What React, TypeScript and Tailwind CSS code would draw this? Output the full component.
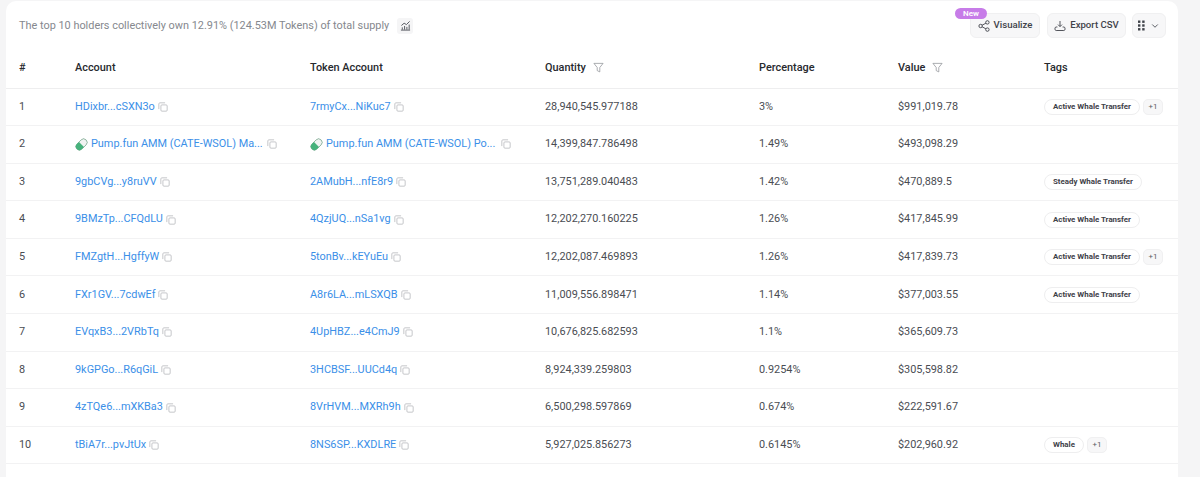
import React from "react";
import { ChevronDown } from "lucide-react";

interface Holder {
  rank: number;
  account: string;
  tokenAccount: string;
  quantity: string;
  percentage: string;
  value: string;
  tag?: string;
  more?: boolean;
  pill?: boolean;
}

const holders: Holder[] = [
  { rank: 1, account: "HDixbr...cSXN3o", tokenAccount: "7rmyCx...NiKuc7", quantity: "28,940,545.977188", percentage: "3%", value: "$991,019.78", tag: "Active Whale Transfer", more: true },
  { rank: 2, account: "Pump.fun AMM (CATE-WSOL) Ma...", tokenAccount: "Pump.fun AMM (CATE-WSOL) Po...", quantity: "14,399,847.786498", percentage: "1.49%", value: "$493,098.29", pill: true },
  { rank: 3, account: "9gbCVg...y8ruVV", tokenAccount: "2AMubH...nfE8r9", quantity: "13,751,289.040483", percentage: "1.42%", value: "$470,889.5", tag: "Steady Whale Transfer" },
  { rank: 4, account: "9BMzTp...CFQdLU", tokenAccount: "4QzjUQ...nSa1vg", quantity: "12,202,270.160225", percentage: "1.26%", value: "$417,845.99", tag: "Active Whale Transfer" },
  { rank: 5, account: "FMZgtH...HgffyW", tokenAccount: "5tonBv...kEYuEu", quantity: "12,202,087.469893", percentage: "1.26%", value: "$417,839.73", tag: "Active Whale Transfer", more: true },
  { rank: 6, account: "FXr1GV...7cdwEf", tokenAccount: "A8r6LA...mLSXQB", quantity: "11,009,556.898471", percentage: "1.14%", value: "$377,003.55", tag: "Active Whale Transfer" },
  { rank: 7, account: "EVqxB3...2VRbTq", tokenAccount: "4UpHBZ...e4CmJ9", quantity: "10,676,825.682593", percentage: "1.1%", value: "$365,609.73" },
  { rank: 8, account: "9kGPGo...R6qGiL", tokenAccount: "3HCBSF...UUCd4q", quantity: "8,924,339.259803", percentage: "0.9254%", value: "$305,598.82" },
  { rank: 9, account: "4zTQe6...mXKBa3", tokenAccount: "8VrHVM...MXRh9h", quantity: "6,500,298.597869", percentage: "0.674%", value: "$222,591.67" },
  { rank: 10, account: "tBiA7r...pvJtUx", tokenAccount: "8NS6SP...KXDLRE", quantity: "5,927,025.856273", percentage: "0.6145%", value: "$202,960.92", tag: "Whale", more: true },
];

const CopyIcon = () => (
  <svg viewBox="0 0 12 12" fill="none" stroke="#b9bbbf" strokeWidth="1" className="ml-[3px] inline-block h-[10px] w-[10px] shrink-0">
    <rect x="3.5" y="3.5" width="7.5" height="7.5" rx="1.2" />
    <path d="M8.5 1H2.2C1.5 1 1 1.5 1 2.2V8.5" />
  </svg>
);

const FilterIcon = () => (
  <svg viewBox="0 0 12 12" fill="none" stroke="#8d9096" strokeWidth="0.8" className="ml-[7px] inline-block h-[11px] w-[11px]">
    <path d="M1 1.5h10L7.4 6v4.8L4.6 9.4V6z" strokeLinejoin="round" />
  </svg>
);

const PillIcon = () => (
  <svg viewBox="0 0 14 14" className="mr-[3px] inline-block h-[13px] w-[13px] shrink-0">
    <g transform="rotate(-45 7 7)">
      <rect x="0" y="3.2" width="14" height="7.6" rx="3.8" fill="#f1f3f2" stroke="#4b8a68" strokeWidth="0.6" />
      <path d="M3.8 3.2H7v7.6H3.800a3.800 3.800 0 0 1 0-7.600z" fill="#47b27c" />
    </g>
  </svg>
);

const ChartIcon = () => (
  <svg viewBox="0 0 12 12" fill="none" stroke="#4b4f56" strokeWidth="1" className="h-[11px] w-[11px]">
    <path d="M1 11h10M2.5 10.5V8M5 10.500V6.500M7.500 10.500V7.500M10 10.500V5" />
    <path d="M1.500 6L4.500 3.500 7 5 10.500 1.500" />
  </svg>
);

const ShareIcon = () => (
  <svg viewBox="0 0 12 12" fill="none" stroke="#3f4249" strokeWidth="0.9" className="h-[12px] w-[12px]">
    <circle cx="2.600" cy="6" r="1.700" />
    <circle cx="9.400" cy="2.400" r="1.700" />
    <circle cx="9.400" cy="9.600" r="1.700" />
    <path d="M4.100 5.200l3.800-2M4.100 6.800l3.800 2" />
  </svg>
);

const ExportIcon = () => (
  <svg viewBox="0 0 12 12" fill="none" stroke="#3f4249" strokeWidth="0.9" className="h-[12px] w-[12px]">
    <path d="M6 1v5.400M4 4.600l2 2 2-2" />
    <path d="M3.400 7H2.200C1.500 7 1 7.500 1 8.200v1.100c0 .7.5 1.200 1.200 1.200h7.600c.7 0 1.200-.5 1.200-1.200V8.200C11 7.500 10.500 7 9.800 7H8.600" />
  </svg>
);

const DotsIcon = () => (
  <svg viewBox="0 0 7 11" fill="#3f4249" className="h-[11px] w-[7px]">
    <rect x="0" y="0.5" width="2.4" height="2.4" />
    <rect x="4.2" y="0.5" width="2.4" height="2.4" />
    <rect x="0" y="4.300" width="2.4" height="2.4" />
    <rect x="4.2" y="4.300" width="2.4" height="2.4" />
    <rect x="0" y="8.100" width="2.4" height="2.4" />
    <rect x="4.2" y="8.100" width="2.4" height="2.4" />
  </svg>
);

export default function App() {
  return (
    <div className="h-[477px] w-[1200px] overflow-hidden bg-[#f5f5f6] pl-[6px] pr-[22px] pt-px font-['Roboto',sans-serif]">
      <div className="h-[490px] rounded-tl-[10px] rounded-tr-[10px] bg-white">
        {/* Top bar */}
        <div className="flex h-[47px] items-start justify-between pl-[13px] pr-[12px] pt-[12px]">
          <div className="flex items-center text-[10.900px] leading-[25px] text-[#85888e]">
            The top 10 holders collectively own 12.91% (124.53M Tokens) of total supply
            <span className="ml-[8px] flex h-[16px] w-[16px] items-center justify-center rounded-[3px] bg-[#f5f5f6]">
              <ChartIcon />
            </span>
          </div>
          <div className="flex items-center gap-[6px]">
            <div className="relative mr-px">
              <span className="absolute -left-[15px] -top-[5px] rounded-full bg-[#c77ce8] px-[8px] text-[8px] font-semibold leading-[11px] text-white">
                New
              </span>
              <button className="flex h-[25px] w-[70px] items-center justify-center gap-[4px] rounded-[6px] border border-[#f0f0f1] bg-[#f7f7f8] text-[9.600px] font-medium text-[#3f4249]">
                <ShareIcon />
                Visualize
              </button>
            </div>
            <button className="flex h-[25px] w-[79px] items-center justify-center gap-[4px] rounded-[6px] border border-[#f0f0f1] bg-[#f7f7f8] text-[9.600px] font-medium text-[#3f4249]">
              <ExportIcon />
              Export CSV
            </button>
            <button className="flex h-[25px] w-[34px] items-center justify-center gap-[5px] rounded-[6px] border border-[#f0f0f1] bg-[#f7f7f8] text-[#3f4249]">
              <DotsIcon />
              <ChevronDown className="h-[10px] w-[10px]" strokeWidth={2} />
            </button>
          </div>
        </div>

        <table className="w-full table-fixed border-collapse text-[10.900px] text-[#4a4d53]">
          <colgroup>
            <col className="w-[56px]" />
            <col className="w-[235px]" />
            <col className="w-[235px]" />
            <col className="w-[214px]" />
            <col className="w-[139px]" />
            <col className="w-[146px]" />
            <col />
          </colgroup>
          <thead>
            <tr className="h-[40px] border-b border-[#eeeeef] text-left text-[10.900px] text-[#27292e]">
              <th className="pl-[13px] font-medium">#</th>
              <th className="pl-[13px] font-medium">Account</th>
              <th className="pl-[13px] font-medium">Token Account</th>
              <th className="pl-[13px] font-medium">
                <span className="flex items-center">Quantity<FilterIcon /></span>
              </th>
              <th className="pl-[13px] font-medium">Percentage</th>
              <th className="pl-[13px] font-medium">
                <span className="flex items-center">Value<FilterIcon /></span>
              </th>
              <th className="pl-[13px] font-medium">Tags</th>
            </tr>
          </thead>
          <tbody>
            {holders.map((h) => (
              <tr key={h.rank} className="h-[37.6px] border-b border-[#f2f2f3]">
                <td className="pl-[13px]">{h.rank}</td>
                <td className="pl-[13px] text-[#3b8fe8]">
                  <span className="flex items-center whitespace-nowrap">
                    {h.pill && <PillIcon />}
                    {h.account}
                    <span className={h.pill ? "ml-[1px] flex" : "flex"}><CopyIcon /></span>
                  </span>
                </td>
                <td className="pl-[13px] text-[#3b8fe8]">
                  <span className="flex items-center whitespace-nowrap">
                    {h.pill && <PillIcon />}
                    {h.tokenAccount}
                    <span className={h.pill ? "ml-[3px] flex" : "flex"}><CopyIcon /></span>
                  </span>
                </td>
                <td className="pl-[13px]">{h.quantity}</td>
                <td className="pl-[13px]">{h.percentage}</td>
                <td className="pl-[13px]">{h.value}</td>
                <td className="pl-[13px]">
                  {h.tag && (
                    <span className="flex items-center gap-[3px]">
                      <span className="flex h-[16px] items-center rounded-full border border-[#eeeeef] bg-white px-[8px] text-[7.900px] font-bold text-[#3f4249]">
                        {h.tag}
                      </span>
                      {h.more && (
                        <span className="flex h-[16px] w-[20px] items-center justify-center rounded-[5px] border border-[#f0f0f1] bg-[#f7f7f8] text-[8px] text-[#5d6066]">
                          +1
                        </span>
                      )}
                    </span>
                  )}
                </td>
              </tr>
            ))}
          </tbody>
        </table>
      </div>
    </div>
  );
}
